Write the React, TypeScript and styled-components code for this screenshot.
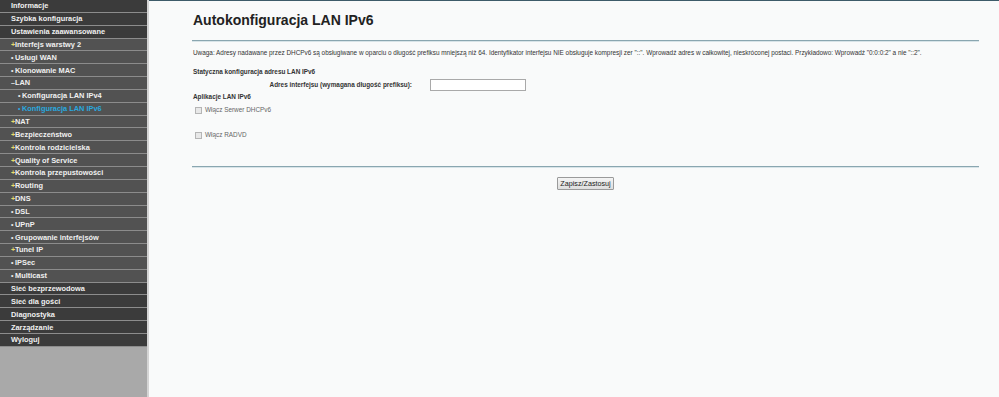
import React from "react";
import styled, { createGlobalStyle } from "styled-components";

const Global = createGlobalStyle`
  html, body { margin: 0; padding: 0; background: #f9fafa; }
  body { font-family: "Liberation Sans", Arial, sans-serif; }
`;

const Page = styled.div`
  display: flex;
  width: 999px;
  height: 397px;
  overflow: hidden;
`;

const Sidebar = styled.nav`
  width: 147px;
  flex: none;
  background: #a9a9a9;
  border-right: 2px solid #d4d4d4;
  display: flex;
  flex-direction: column;
`;

type Level = 0 | 1 | 2;

const Row = styled.div<{ $level: Level }>`
  height: 11.85px;
  border-bottom: 1px solid #8c8c8c;
  background: ${(p) => (p.$level === 0 ? "#3b3b3b" : "#525252")};
  display: flex;
  align-items: center;
  padding-left: ${(p) => (p.$level === 0 ? 11 : p.$level === 1 ? 11 : 18)}px;
  font-size: 7.4px;
  font-weight: bold;
  color: #f0f0f0;
  white-space: nowrap;
  overflow: hidden;
`;

const Bullet = styled.span<{ $kind: "plus" | "dot" | "minus"; $active?: boolean }>`
  display: inline-block;
  width: 4px;
  color: ${(p) => (p.$active ? "#29a8df" : p.$kind === "plus" ? "#e6de6c" : "#e8e8e8")};
  font-size: 7px;
`;

const Label = styled.span<{ $active?: boolean }>`
  color: ${(p) => (p.$active ? "#29a8df" : "#f0f0f0")};
`;

const Main = styled.main`
  flex: 1;
  min-width: 0;
  border-top: 1px solid #3d5b69;
  padding: 10px 20px 0 43px;
  display: flex;
  flex-direction: column;
  color: #333;
  font-size: 6.4px;
  line-height: 8px;
`;

const Title = styled.h1`
  margin: 0 0 0 1px;
  font-size: 14px;
  font-weight: bold;
  color: #222;
  height: 19px;
  line-height: 19px;
`;

const Divider = styled.div<{ $top: number }>`
  height: 1px;
  background: #8aa6b0;
  box-shadow: 0 1px 0 #d8e4e8;
  margin-top: ${(p) => p.$top}px;
`;

const Notice = styled.p`
  margin: 8px 0 0 1px;
  color: #333;
  white-space: nowrap;
`;

const SectionTitle = styled.div<{ $top: number }>`
  margin-top: ${(p) => p.$top}px;
  margin-left: 1px;
  font-weight: bold;
  color: #333;
`;

const FieldRow = styled.div`
  display: flex;
  align-items: center;
  margin-top: 3px;
`;

const FieldLabel = styled.label`
  width: 220px;
  text-align: right;
  font-weight: bold;
  color: #333;
`;

const TextInput = styled.input`
  margin: 0 0 0 18px;
  width: 94px;
  height: 10px;
  padding: 0;
  border: 1px solid #a9a9a9;
  background: #fff;
  box-sizing: content-box;
`;

const CheckRow = styled.label<{ $top: number }>`
  display: flex;
  align-items: center;
  margin-top: ${(p) => p.$top}px;
  margin-left: 3px;
  color: #666;
`;

const Box = styled.span`
  width: 5px;
  height: 5px;
  border: 1px solid #b5b5b5;
  background: #e8e8e8;
  margin-right: 3px;
`;

const ButtonRow = styled.div`
  display: flex;
  justify-content: center;
  margin-top: 10px;
`;

const Button = styled.button`
  font-family: "Liberation Sans", Arial, sans-serif;
  font-size: 7.2px;
  line-height: 1;
  color: #222;
  height: 13px;
  padding: 0 2px;
  background: linear-gradient(#f4f4f4, #dedede);
  border: 1px solid #9a9a9a;
  border-radius: 1px;
`;

type Item = { label: string; level: Level; bullet?: "plus" | "dot" | "minus"; active?: boolean };

const items: Item[] = [
  { label: "Informacje", level: 0 },
  { label: "Szybka konfiguracja", level: 0 },
  { label: "Ustawienia zaawansowane", level: 0 },
  { label: "Interfejs warstwy 2", level: 1, bullet: "plus" },
  { label: "Usługi WAN", level: 1, bullet: "dot" },
  { label: "Klonowanie MAC", level: 1, bullet: "dot" },
  { label: "LAN", level: 1, bullet: "minus" },
  { label: "Konfiguracja LAN IPv4", level: 2, bullet: "dot" },
  { label: "Konfiguracja LAN IPv6", level: 2, bullet: "dot", active: true },
  { label: "NAT", level: 1, bullet: "plus" },
  { label: "Bezpieczeństwo", level: 1, bullet: "plus" },
  { label: "Kontrola rodzicielska", level: 1, bullet: "plus" },
  { label: "Quality of Service", level: 1, bullet: "plus" },
  { label: "Kontrola przepustowości", level: 1, bullet: "plus" },
  { label: "Routing", level: 1, bullet: "plus" },
  { label: "DNS", level: 1, bullet: "plus" },
  { label: "DSL", level: 1, bullet: "dot" },
  { label: "UPnP", level: 1, bullet: "dot" },
  { label: "Grupowanie interfejsów", level: 1, bullet: "dot" },
  { label: "Tunel IP", level: 1, bullet: "plus" },
  { label: "IPSec", level: 1, bullet: "dot" },
  { label: "Multicast", level: 1, bullet: "dot" },
  { label: "Sieć bezprzewodowa", level: 0 },
  { label: "Sieć dla gości", level: 0 },
  { label: "Diagnostyka", level: 0 },
  { label: "Zarządzanie", level: 0 },
  { label: "Wyloguj", level: 0 },
];

const glyph = { plus: "+", dot: "•", minus: "–" };

export default function App() {
  return (
    <Page>
      <Global />
      <Sidebar>
        {items.map((it) => (
          <Row key={it.label} $level={it.level}>
            {it.bullet && (
              <Bullet $kind={it.bullet} $active={it.active}>
                {glyph[it.bullet]}
              </Bullet>
            )}
            <Label $active={it.active}>{it.label}</Label>
          </Row>
        ))}
      </Sidebar>
      <Main>
        <Title>Autokonfiguracja LAN IPv6</Title>
        <Divider $top={10} />
        <Notice>
          Uwaga: Adresy nadawane przez DHCPv6 są obsługiwane w oparciu o długość prefiksu mniejszą niż 64. Identyfikator interfejsu NIE obsługuje kompresji zer "::". Wprowadź adres w całkowitej, nieskróconej postaci. Przykładowo: Wprowadź "0:0:0:2" a nie "::2".
        </Notice>
        <SectionTitle $top={11}>Statyczna konfiguracja adresu LAN IPv6</SectionTitle>
        <FieldRow>
          <FieldLabel>Adres interfejsu (wymagana długość prefiksu):</FieldLabel>
          <TextInput type="text" />
        </FieldRow>
        <SectionTitle $top={2}>Aplikacje LAN IPv6</SectionTitle>
        <CheckRow $top={5}>
          <Box />
          Włącz Serwer DHCPv6
        </CheckRow>
        <CheckRow $top={17}>
          <Box />
          Włącz RADVD
        </CheckRow>
        <Divider $top={27} />
        <ButtonRow>
          <Button type="button">Zapisz/Zastosuj</Button>
        </ButtonRow>
      </Main>
    </Page>
  );
}
